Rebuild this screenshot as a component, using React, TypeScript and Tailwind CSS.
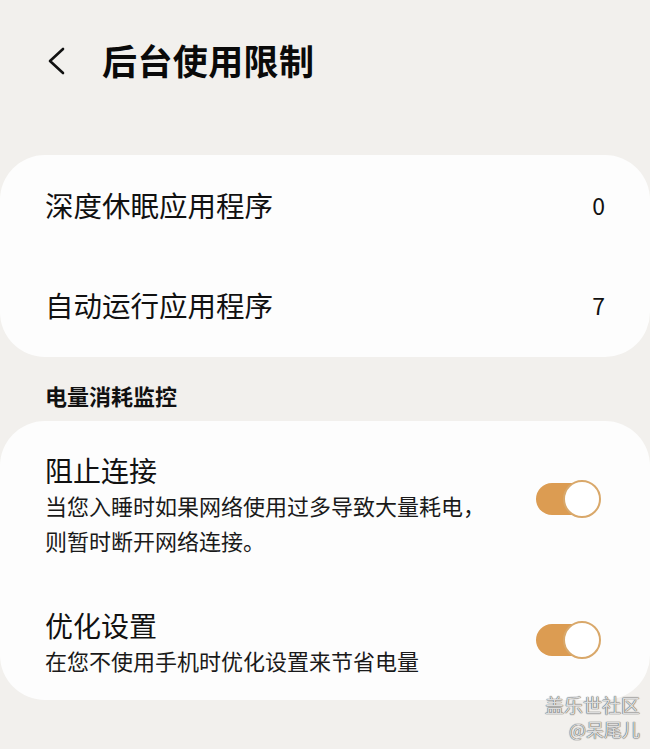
import React from 'react';

const font = { fontFamily: '"Noto Sans CJK SC", "Noto Sans", sans-serif' };

// 开关
function Toggle({ className = '' }: { className?: string }) {
  return (
    <div className={'relative w-[65px] h-[38px] shrink-0 ' + className}>
      <div className="absolute left-0 top-[3px] h-[32px] w-[58px] rounded-full bg-[#dc9c52]" />
      <div className="absolute right-0 top-0 h-[38px] w-[38px] rounded-full bg-white border-2 border-[#d9a86a]" />
    </div>
  );
}

function ValueRow({ label, value }: { label: string; value: string }) {
  return (
    <div className="h-[100px] flex items-center justify-between pl-[45px] pr-[45px]">
      <span className="text-[28.5px] leading-none text-[#111]">{label}</span>
      <span className="text-[23px] leading-none text-[#111]">{value}</span>
    </div>
  );
}

export default function App() {
  return (
    <div className="relative w-[650px] min-h-[749px] bg-[#f2f0ed] overflow-hidden" style={font}>
      {/* Header */}
      <div className="flex items-center h-[44px] mt-[37px] pl-[46px]">
        <svg width="20" height="28" viewBox="0 0 20 28" className="mt-[4px]">
          <path d="M17 2 L4 14 L17 26" fill="none" stroke="#111" strokeWidth="2.6" strokeLinecap="round" strokeLinejoin="round" />
        </svg>
        <h1 className="ml-[36px] text-[35px] font-bold leading-none text-[#0a0a0a] tracking-[0.4px]">后台使用限制</h1>
      </div>

      {/* 应用程序 */}
      <div className="mt-[74px] bg-[#fdfdfd] rounded-[45px] pb-[2px]">
        <ValueRow label="深度休眠应用程序" value="0" />
        <ValueRow label="自动运行应用程序" value="7" />
      </div>

      <div className="h-[64px] flex items-center pl-[45px] pt-[12px]">
        <span className="text-[22px] font-bold leading-none text-[#111]">电量消耗监控</span>
      </div>

      {/* 电量消耗监控 */}
      <div className="bg-[#fdfdfd] rounded-[45px] pt-[31px] pb-[22px] pl-[45px] pr-[49px]">
        <div className="flex items-center justify-between">
          <div>
            <div className="text-[28px] leading-[36px] text-[#111]">阻止连接</div>
            <div className="text-[22px] leading-[35px] text-[#1a1a1a]">
              当您入睡时如果网络使用过多导致大量耗电，
              <br />
              则暂时断开网络连接。
            </div>
          </div>
          <Toggle className="mb-[12px]" />
        </div>
        <div className="flex items-center justify-between mt-[49px]">
          <div>
            <div className="text-[28px] leading-[36px] text-[#111]">优化设置</div>
            <div className="text-[22px] leading-[35px] text-[#1a1a1a]">在您不使用手机时优化设置来节省电量</div>
          </div>
          <Toggle className="mb-[6px]" />
        </div>
      </div>

      {/* 水印 */}
      <div className="absolute right-[10px] bottom-[8px] flex flex-col items-end text-[#dcdcdc] [text-shadow:0_0_1px_#555,0_0_1px_#555]">
        <span className="text-[19px] leading-[24px]">盖乐世社区</span>
        <span className="text-[18px] leading-[24px]">@呆尾儿</span>
      </div>
    </div>
  );
}
